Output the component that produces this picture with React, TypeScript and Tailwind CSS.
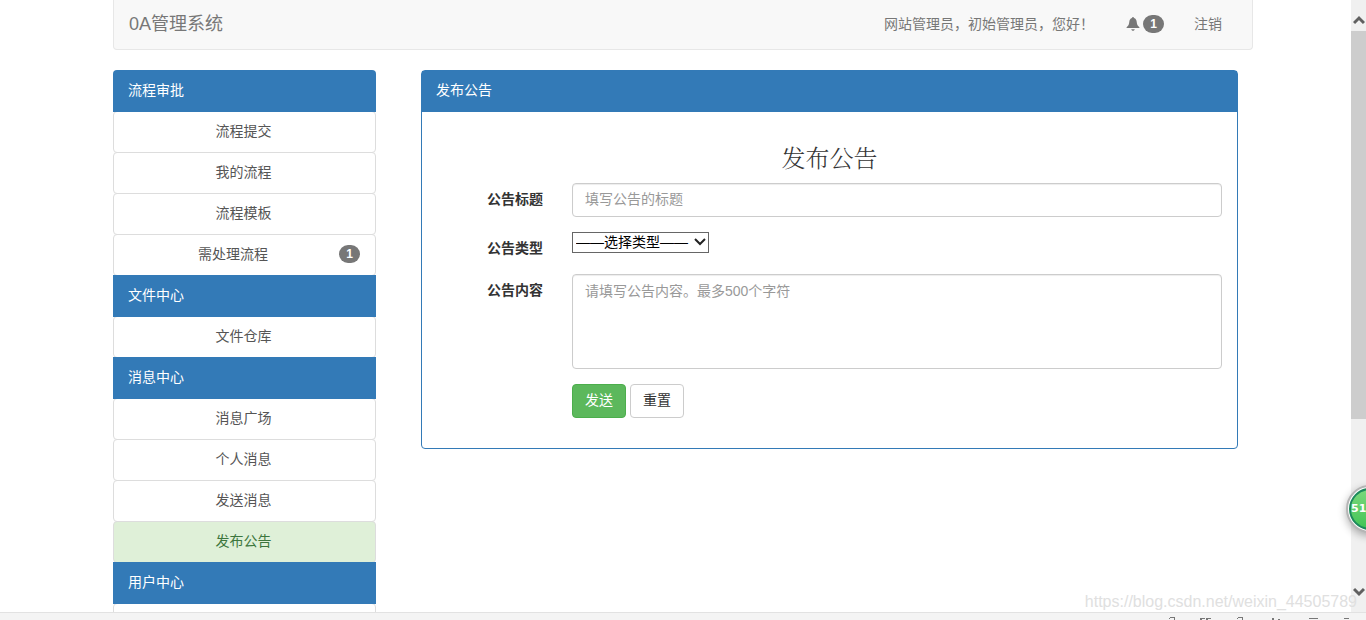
import { useState, type FormEvent } from 'react';

type NavItem = {
  label: string;
  badge?: number;
};

type NavGroup = {
  title: string;
  items: NavItem[];
};

const navGroups: NavGroup[] = [
  {
    title: '流程审批',
    items: [{ label: '流程提交' }, { label: '我的流程' }, { label: '流程模板' }, { label: '需处理流程', badge: 1 }],
  },
  { title: '文件中心', items: [{ label: '文件仓库' }] },
  {
    title: '消息中心',
    items: [{ label: '消息广场' }, { label: '个人消息' }, { label: '发送消息' }, { label: '发布公告' }],
  },
  { title: '用户中心', items: [{ label: '' }] },
];

const labelClass = 'w-[106px] shrink-0 pt-1.5 text-right font-bold text-[#333]';
const fieldClass =
  'block w-full rounded border border-[#ccc] bg-white px-3 leading-5 text-[#555] shadow-[inset_0_1px_1px_rgba(0,0,0,0.075)] placeholder:text-[#999]';

function Badge({ count }: { count: number }) {
  return (
    <span className="inline-block min-w-[21px] rounded-full bg-[#777] px-[7px] py-[3px] text-center text-xs leading-3 font-bold text-white">
      {count}
    </span>
  );
}

function BellIcon() {
  return (
    <svg viewBox="0 0 14 14" className="h-3.5 w-3.5" fill="currentColor" aria-hidden="true">
      <path d="M7 0c.6 0 .9.400 1 1C9.800 1.500 10.500 3 10.700 4.800c.2 2.200.7 3.600 1.700 4.500.6.500 1.100.800 1.100 1.300 0 .4-.3.500-.8.500H1.300c-.5 0-.8-.1-.8-.5 0-.5.5-.8 1.100-1.300 1-.9 1.500-2.300 1.700-4.500C3.500 3 4.200 1.500 6 1c.1-.6.4-1 1-1z" />
      <path d="M5.200 12.200h3.600c-.2.900-.9 1.500-1.800 1.500s-1.600-.6-1.800-1.500z" />
    </svg>
  );
}

function Navbar() {
  return (
    <nav className="flex h-[50px] items-center justify-between rounded-b border border-t-0 border-[#e7e7e7] bg-[#f8f8f8] px-[15px] pb-0.5 text-[#777]">
      <a href="#home" className="text-lg leading-5">
        0A管理系统
      </a>
      <div className="flex items-center">
        <span className="mr-8">网站管理员，初始管理员，您好！</span>
        <a href="#messages" className="mr-[30px] flex items-center gap-[3px]">
          <BellIcon />
          <Badge count={1} />
        </a>
        <a href="#logout" className="mr-[15px]">
          注销
        </a>
      </div>
    </nav>
  );
}

function Sidebar() {
  const [active, setActive] = useState('发布公告');

  return (
    <aside className="w-[263px] shrink-0">
      {navGroups.map((group, index) => (
        <section key={group.title} className={index === 0 ? '' : '-mt-px'}>
          <h2
            className={`relative z-10 h-[42px] bg-[#337ab7] px-[15px] py-2.5 leading-5 text-white ${index === 0 ? 'rounded-t' : ''}`}
          >
            {group.title}
          </h2>
          {group.items.map((item) => (
            <a
              key={item.label}
              href={`#${item.label}`}
              onClick={() => setActive(item.label)}
              className={`-mt-px flex h-[42px] items-center rounded border border-[#ddd] pr-[15px] pb-0.5 pl-[13px] ${
                active === item.label ? 'bg-[#dff0d8] text-[#3c763d]' : 'bg-white text-[#555]'
              }`}
            >
              <span className="grow text-center">{item.label}</span>
              {item.badge ? <Badge count={item.badge} /> : null}
            </a>
          ))}
        </section>
      ))}
    </aside>
  );
}

function AnnouncementPanel() {
  const handleSubmit = (event: FormEvent) => event.preventDefault();

  return (
    <section className="grow rounded border border-[#337ab7] bg-white">
      <h2 className="h-[41px] bg-[#337ab7] px-3.5 py-[9px] leading-5 text-white">发布公告</h2>
      <form onSubmit={handleSubmit} className="px-[15px] pt-8 pb-[30px]">
        <h3 className="mb-[9px] text-center font-['Liberation_Serif','Noto_Serif_CJK_SC','Noto_Sans_CJK_SC',serif] text-2xl leading-[30px] font-light text-[#333]">
          发布公告
        </h3>
        <div className="mb-[15px] flex gap-[29px]">
          <label htmlFor="title" className={labelClass}>
            公告标题
          </label>
          <input id="title" type="text" placeholder="填写公告的标题" className={`${fieldClass} h-[34px] pb-0.5`} />
        </div>
        <div className="mb-[15px] flex h-[27px] items-start gap-[29px]">
          <label htmlFor="type" className={labelClass}>
            公告类型
          </label>
          <div className="relative">
            <select
              id="type"
              className="block h-[21px] w-[137px] appearance-none border border-[#666] bg-white pb-0.5 pl-[3px] leading-[18px] text-black"
            >
              <option>——选择类型——</option>
              <option>公司公告</option>
              <option>部门公告</option>
            </select>
            <svg
              viewBox="0 0 12 8"
              className="pointer-events-none absolute top-[6px] right-[3px] h-2 w-3"
              fill="none"
              stroke="#222"
              strokeWidth="2"
              aria-hidden="true"
            >
              <path d="M1 1l5 5 5-5" />
            </svg>
          </div>
        </div>
        <div className="mb-[15px] flex gap-[29px]">
          <label htmlFor="content" className={labelClass}>
            公告内容
          </label>
          <textarea
            id="content"
            placeholder="请填写公告内容。最多500个字符"
            className={`${fieldClass} h-[95px] resize-none py-1.5`}
          />
        </div>
        <div className="flex gap-1 pl-[135px]">
          <button
            type="submit"
            className="h-[34px] rounded border border-[#4cae4c] bg-[#5cb85c] px-3 pb-0.5 text-white"
          >
            发送
          </button>
          <button type="reset" className="h-[34px] rounded border border-[#ccc] bg-white px-3 pb-0.5 text-[#333]">
            重置
          </button>
        </div>
      </form>
    </section>
  );
}

function Scrollbar() {
  return (
    <div className="absolute inset-y-0 right-0 flex w-[15px] flex-col bg-[#f0f0f0] text-[#606060]" aria-hidden="true">
      <div className="flex h-[31px] items-end justify-center pb-1.5">
        <svg viewBox="0 0 12 10" className="h-2.5 w-3" fill="none" stroke="currentColor" strokeWidth="3">
          <path d="M1 8l5-5 5 5" />
        </svg>
      </div>
      <div className="h-[388px] bg-[#cdcdcd]" />
      <div className="mt-auto flex h-[25px] items-start justify-center">
        <svg viewBox="0 0 12 10" className="h-2.5 w-3" fill="none" stroke="currentColor" strokeWidth="3">
          <path d="M1 2l5 5 5-5" />
        </svg>
      </div>
    </div>
  );
}

function FloatingBall() {
  return (
    <button
      type="button"
      className="absolute top-[485px] -right-7 z-20 h-12 w-12 rounded-full border-2 border-[#b5b5b5] bg-white p-px shadow-[0_3px_8px_rgba(0,0,0,0.3)]"
    >
      <span className="flex h-full w-full items-center rounded-full border-2 border-[#1d8a5c] bg-linear-to-b from-[#7ad87c] to-[#3fc456] font-['DejaVu_Sans',sans-serif] text-[11px] font-bold text-white">
        51
      </span>
    </button>
  );
}

function StatusBar() {
  return (
    <footer className="flex h-2 shrink-0 items-end justify-end border-t border-[#e2e2e2] bg-[#f4f4f4]">
      <svg viewBox="0 0 206 3" className="h-[3px] w-[206px]" fill="#777" aria-hidden="true">
        <path d="M10 0h5v3h-1V1h-4v1h-1V1h1zM40 1h5v1h-3v1h-2zM46 1h5v1h-3v1h-2zM78 0h5v3h-1V1h-4v1h-1V1h1zM112 1h2v2h-2zM118 2h2v1h-2zM149 1h9v1h-9zM184 1h5v1h-5z" />
      </svg>
    </footer>
  );
}

export default function App() {
  return (
    <div className="flex h-screen flex-col overflow-hidden bg-white font-['Liberation_Sans','Noto_Sans_CJK_SC',sans-serif] text-sm leading-5">
      <div className="relative min-h-0 grow overflow-hidden">
        <div className="mx-auto max-w-[1140px]">
          <Navbar />
          <main className="mt-5 flex items-start gap-[45px] pr-[15px]">
            <Sidebar />
            <AnnouncementPanel />
          </main>
        </div>
        <Scrollbar />
        <FloatingBall />
        <span className="absolute right-[9px] bottom-0 z-10 text-base leading-5 text-[#e0e0e0]">
          https://blog.csdn.net/weixin_44505789
        </span>
      </div>
      <StatusBar />
    </div>
  );
}
